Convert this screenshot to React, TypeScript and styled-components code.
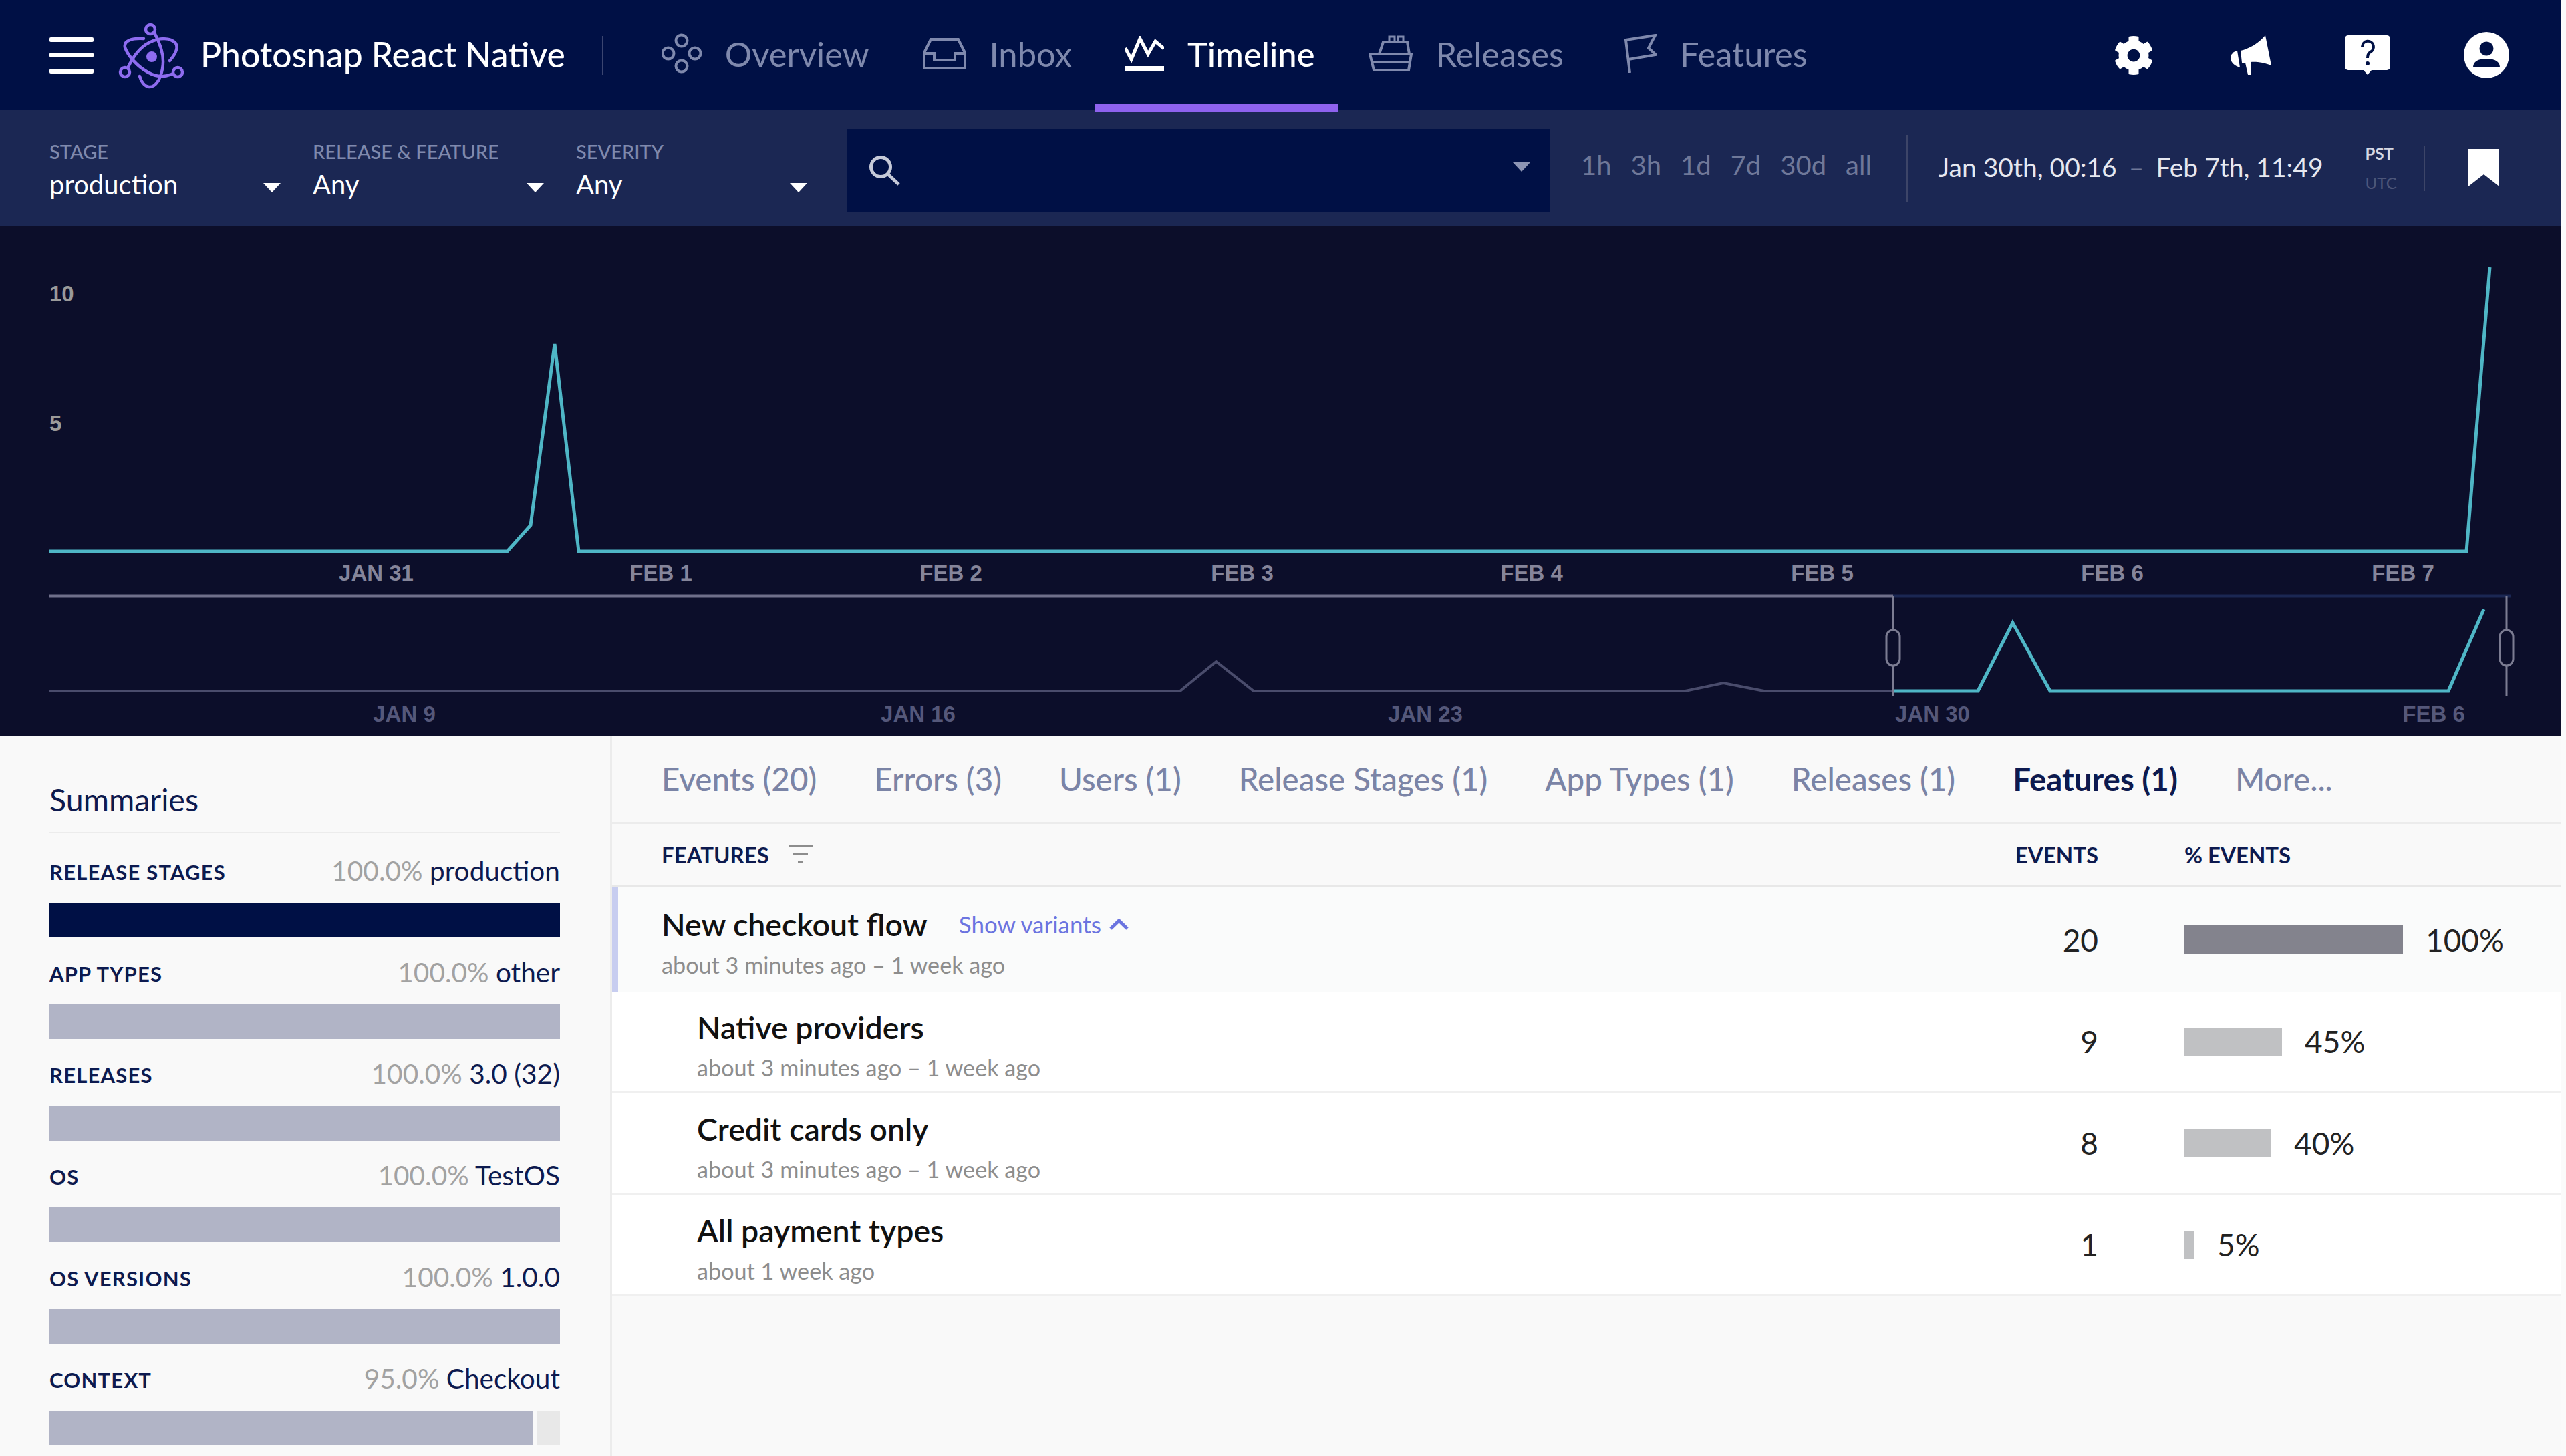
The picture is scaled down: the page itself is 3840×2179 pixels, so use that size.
import React from "react";
import styled, { createGlobalStyle } from "styled-components";
import { FaCog } from "react-icons/fa";

const GlobalStyle = createGlobalStyle`
  html, body {
    margin: 0;
    padding: 0;
    background: #fafafa;
  }
  body {
    font-family: Lato, "Open Sans", sans-serif;
  }
`;

const Page = styled.div`
  width: 3832px;
  height: 2179px;
  overflow: hidden;
  display: flex;
  flex-direction: column;
`;

/* top navigation */
const Header = styled.header`
  height: 165px;
  flex: none;
  display: flex;
  align-items: center;
  padding: 0 77px 0 74px;
  background: #001045;
`;

const Burger = styled.div`
  width: 66px;
  height: 54px;
  display: flex;
  flex-direction: column;
  justify-content: space-between;
  margin-right: 37px;
  span {
    height: 7px;
    border-radius: 2px;
    background: #fff;
  }
`;

const LogoSlot = styled.svg`
  width: 100px;
  height: 100px;
  flex: none;
  margin-right: 23px;
`;

const ProjectName = styled.div`
  padding-bottom: 4px;
  color: #fff;
  font-size: 51.6px;
  font-weight: 500;
  white-space: nowrap;
`;

const NavDivider = styled.div`
  width: 2px;
  height: 58px;
  margin: 0 42px 0 55px;
  background: #3b4570;
`;

const NavTabs = styled.nav`
  display: flex;
  align-self: stretch;
`;

const NavTab = styled.a<{ $active?: boolean }>`
  position: relative;
  display: flex;
  align-items: center;
  gap: 35px;
  padding: 0 35px 5px 45px;
  color: ${(p) => (p.$active ? "#fff" : "#7f89ad")};
  font-size: 50.7px;
  font-weight: ${(p) => (p.$active ? 500 : 400)};
  &::after {
    content: "";
    display: ${(p) => (p.$active ? "block" : "none")};
    position: absolute;
    left: 0;
    right: 0;
    top: 155px;
    height: 13px;
    background: #8e62ee;
    z-index: 2;
  }
`;

const NavIcon = styled.svg`
  flex: none;
  fill: none;
  stroke: currentColor;
  stroke-width: 4;
`;

const UtilIcons = styled.div`
  margin-left: auto;
  display: flex;
  align-items: center;
  gap: 110px;
  color: #fff;
  svg:first-child {
    margin-right: 5px;
  }
`;

/* filter bar */
const SubBar = styled.div`
  height: 173px;
  flex: none;
  display: flex;
  align-items: center;
  padding-left: 74px;
  background: #1b2753;
`;

const Filters = styled.div`
  display: flex;
  gap: 48px;
  margin: 7px 60px 0 0;
`;

const Filter = styled.div`
  width: 346px;
  height: 124px;
  padding-top: 18px;
  box-sizing: border-box;
`;

const FilterLabel = styled.div`
  height: 32px;
  line-height: 32px;
  color: #7f89ad;
  font-size: 29px;
  font-weight: 500;
`;

const FilterValue = styled.div`
  margin-top: 9px;
  height: 48px;
  display: flex;
  align-items: center;
  justify-content: space-between;
  color: #fff;
  font-size: 40px;
`;

const Caret = styled.span<{ $dim?: boolean }>`
  width: 0;
  height: 0;
  margin-top: ${(p) => (p.$dim ? "-10px" : "10px")};
  border-left: 13px solid transparent;
  border-right: 13px solid transparent;
  border-top: 14px solid ${(p) => (p.$dim ? "#8d95b4" : "#fff")};
`;

const SearchBox = styled.div`
  width: 1051px;
  height: 124px;
  flex: none;
  margin-top: 7px;
  display: flex;
  align-items: center;
  justify-content: space-between;
  padding: 0 29px 0 32px;
  box-sizing: border-box;
  background: #001045;
  color: #c5c9d8;
`;

const Ranges = styled.div`
  display: flex;
  gap: 29px;
  margin: -9px 52px 0 47px;
  color: #6f7899;
  font-size: 40px;
`;

const BarRule = styled.div<{ $h: number }>`
  width: 2px;
  height: ${(p) => p.$h}px;
  flex: none;
  background: #3d4568;
`;

const DateRange = styled.div`
  margin: -3px 63px 0 46px;
  display: flex;
  gap: 18px;
  color: #e6e8f0;
  font-size: 39px;
  white-space: nowrap;
  span {
    color: #6f7899;
  }
`;

const Zones = styled.div`
  width: 45px;
  margin-right: 42px;
  display: flex;
  flex-direction: column;
  gap: 16px;
  font-size: 24px;
  line-height: 28px;
`;

const Zone = styled.div<{ $on?: boolean }>`
  color: ${(p) => (p.$on ? "#d5d8e4" : "#4d5679")};
  font-weight: ${(p) => (p.$on ? 700 : 400)};
`;

const Bookmark = styled.svg`
  width: 46px;
  height: 56px;
  margin: -2px 0 0 65px;
  fill: #fff;
`;

/* charts */
const ChartSvg = styled.svg`
  display: block;
  flex: none;
  width: 3832px;
  height: 764px;
  background: #0c0e2a;
  font-family: "Liberation Sans", Arial, sans-serif;
  font-weight: 700;
`;

/* lower half */
const Lower = styled.div`
  flex: 1;
  display: flex;
  min-height: 0;
  background: #f9f9f9;
`;

const Sidebar = styled.aside`
  width: 916px;
  flex: none;
  box-sizing: border-box;
  padding: 62px 75px 0 74px;
  border-right: 3px solid #ececec;
`;

const SideTitle = styled.h2`
  margin: 0 0 4px;
  padding-bottom: 17px;
  height: 64px;
  line-height: 64px;
  box-sizing: content-box;
  border-bottom: 2px solid #ececec;
  color: #0d1a4f;
  font-size: 46.5px;
  font-weight: 400;
`;

const SumHead = styled.div`
  height: 100px;
  padding-top: 7px;
  box-sizing: border-box;
  display: flex;
  align-items: center;
  justify-content: space-between;
  white-space: nowrap;
`;

const SumLabel = styled.div`
  color: #0d1a4f;
  font-size: 31px;
  font-weight: 700;
  letter-spacing: 1.2px;
`;

const SumValue = styled.div`
  margin-top: -4px;
  color: #0d1a4f;
  font-size: 40.6px;
  span {
    color: #a2a2a2;
  }
`;

const SumTrack = styled.div`
  height: 52px;
  display: flex;
  gap: 7px;
`;

const SumFill = styled.div<{ $first?: boolean }>`
  height: 100%;
  background: ${(p) => (p.$first ? "#001045" : "#b1b4c6")};
`;

const SumRest = styled.div`
  flex: 1;
  background: #e8e8e8;
`;

const Main = styled.main`
  flex: 1;
  min-width: 0;
`;

const MainTabs = styled.div`
  height: 128px;
  box-sizing: content-box;
  display: flex;
  align-items: center;
  gap: 86px;
  padding-left: 74px;
  border-bottom: 3px solid #ececec;
`;

const MainTab = styled.div<{ $active?: boolean }>`
  margin-top: -2px;
  color: ${(p) => (p.$active ? "#0d1a4f" : "#7b84a6")};
  font-size: 47.5px;
  font-weight: ${(p) => (p.$active ? 700 : 500)};
  white-space: nowrap;
`;

const Cols = styled.div`
  display: grid;
  grid-template-columns: 1fr 120px 563px;
  column-gap: 129px;
  align-items: center;
`;

const TableHead = styled(Cols)`
  height: 91px;
  padding-left: 74px;
  border-bottom: 4px solid #e8e8e8;
  color: #0d1a4f;
  font-size: 33px;
  font-weight: 700;
`;

const HeadName = styled.div`
  display: flex;
  align-items: center;
  gap: 29px;
`;

const HeadEvents = styled.div`
  justify-self: end;
`;

const FeatureRow = styled(Cols)<{ $selected?: boolean; $variant?: boolean }>`
  height: ${(p) => (p.$selected ? 156 : 152)}px;
  box-sizing: border-box;
  padding-left: ${(p) => (p.$selected ? 65 : p.$variant ? 127 : 74)}px;
  background: ${(p) => (p.$selected ? "#fafbfb" : "#fff")};
  border-left: ${(p) => (p.$selected ? "9px solid #c7cdf0" : "none")};
  border-bottom: ${(p) => (p.$selected ? "none" : "3px solid #f0f0f0")};
`;

const NameCell = styled.div<{ $selected?: boolean }>`
  padding-top: ${(p) => (p.$selected ? 12 : 16)}px;
`;

const TitleLine = styled.div`
  display: flex;
  align-items: center;
  gap: 47px;
`;

const RowTitle = styled.div`
  color: #111;
  font-size: 46.5px;
  font-weight: 600;
  line-height: 60px;
`;

const ShowVariants = styled.a`
  display: flex;
  align-items: center;
  gap: 12px;
  color: #6b74e0;
  font-size: 35px;
`;

const RowSub = styled.div`
  margin-top: 3px;
  color: #8d8d8d;
  font-size: 34.2px;
  line-height: 56px;
`;

const RowCount = styled.div`
  justify-self: end;
  color: #222;
  font-size: 46px;
`;

const PctCell = styled.div`
  display: flex;
  align-items: center;
  gap: 34px;
  color: #222;
  font-size: 46px;
`;

const PctBar = styled.div<{ $selected?: boolean }>`
  height: 42px;
  flex: none;
  background: ${(p) => (p.$selected ? "#83838d" : "#c0c1c3")};
`;

const summaries = [
  { label: "RELEASE STAGES", pct: "100.0%", value: "production", fill: 100 },
  { label: "APP TYPES", pct: "100.0%", value: "other", fill: 100 },
  { label: "RELEASES", pct: "100.0%", value: "3.0 (32)", fill: 100 },
  { label: "OS", pct: "100.0%", value: "TestOS", fill: 100 },
  { label: "OS VERSIONS", pct: "100.0%", value: "1.0.0", fill: 100 },
  { label: "CONTEXT", pct: "95.0%", value: "Checkout", fill: 94.6 },
];

const tabs = ["Events (20)", "Errors (3)", "Users (1)", "Release Stages (1)", "App Types (1)", "Releases (1)", "Features (1)", "More..."];

const rows = [
  { name: "New checkout flow", sub: "about 3 minutes ago – 1 week ago", count: 20, pct: 100, barW: 327, selected: true },
  { name: "Native providers", sub: "about 3 minutes ago – 1 week ago", count: 9, pct: 45, barW: 146, variant: true },
  { name: "Credit cards only", sub: "about 3 minutes ago – 1 week ago", count: 8, pct: 40, barW: 130, variant: true },
  { name: "All payment types", sub: "about 1 week ago", count: 1, pct: 5, barW: 15, variant: true },
];

const Logo = () => (
  <LogoSlot viewBox="0 0 100 100" fill="none" stroke="#8e6cf0" strokeWidth="4.5" strokeLinecap="round">
    <circle cx="48" cy="11" r="7" />
    <circle cx="10" cy="75" r="7" />
    <circle cx="89" cy="75" r="7" />
    <circle cx="50" cy="52" r="8" fill="#8e6cf0" stroke="none" />
    <path d="M54 16 C62 32 70 50 66 70 C63 88 54 98 46 97 C39 96 34 89 32 81" />
    <path d="M14 69 C22 52 32 38 46 31 C62 23 78 23 86 32 C91 40 84 50 77 58" />
    <path d="M82 77 C70 83 58 83 44 75 C28 66 14 50 10 38 C8 28 20 24 38 25" />
  </LogoSlot>
);

const OverviewIcon = () => (
  <NavIcon width="60" height="60" viewBox="0 0 60 60">
    <circle cx="30" cy="11" r="8.5" />
    <circle cx="10" cy="30" r="8.5" />
    <circle cx="50" cy="30" r="8.5" />
    <circle cx="30" cy="49" r="8.5" />
  </NavIcon>
);

const InboxIcon = () => (
  <NavIcon width="65" height="50" viewBox="0 0 65 50">
    <path d="M12 4 H53 L63 24 V47 H2 V24 Z" />
    <path d="M2 25 H17 V35 H48 V25 H63" />
  </NavIcon>
);

const TimelineIcon = () => (
  <NavIcon width="58" height="52" viewBox="0 0 58 52" strokeLinejoin="miter">
    <path d="M0 18 L9 35 L22 4 L34 27 L45 8 L58 19" strokeWidth="5" />
    <rect x="0" y="45" width="58" height="7" fill="currentColor" stroke="none" />
  </NavIcon>
);

const ReleasesIcon = () => (
  <NavIcon width="66" height="54" viewBox="0 0 66 54">
    <path d="M31 10 V2 H39 V10 M44 10 V2 H52 V10" strokeWidth="3" />
    <path d="M16 28 L22 10 H58 L61 28" />
    <path d="M2 28 H64 L60 52 H8 Z" />
    <path d="M4 40 H62" />
  </NavIcon>
);

const FlagIcon = () => (
  <NavIcon width="59" height="58" viewBox="-11 0 59 58">
    <path d="M8 58 L2 9 L46 2 L36 21 L47 31 L6 38" />
  </NavIcon>
);

const MegaphoneIcon = () => (
  <svg width="61" height="59" viewBox="0 0 61 59" fill="#fff">
    <path d="M15 23 C28 20 42 12 52 0 L61 45 C50 40 36 39 30 40 L31 59 H26 L22 41 L17 41 Z" />
    <path d="M10 23 L14 48 C6 46 0 40 0 34 C0 28 5 24 10 23 Z" />
  </svg>
);

const HelpIcon = () => (
  <svg width="68" height="59" viewBox="0 0 68 59">
    <path d="M5 0 H63 A5 5 0 0 1 68 5 V47 A5 5 0 0 1 63 52 H40 L34 59 L28 52 H5 A5 5 0 0 1 0 47 V5 A5 5 0 0 1 5 0 Z" fill="#fff" />
    <path d="M26 17 A8.5 8.5 0 1 1 38 25 C35 27 34 29 34 34" fill="none" stroke="#001045" strokeWidth="4" />
    <circle cx="34" cy="42" r="3" fill="#001045" />
  </svg>
);

const UserIcon = () => (
  <svg width="68" height="69" viewBox="0 0 68 69">
    <ellipse cx="34" cy="34.5" rx="34" ry="34.5" fill="#fff" />
    <circle cx="34" cy="25" r="10.5" fill="#001045" />
    <path d="M14 53 C14 43 24 40 34 40 C44 40 54 43 54 53 Z" fill="#001045" />
  </svg>
);

const SearchIcon = () => (
  <svg width="47" height="46" viewBox="0 0 47 46" fill="none" stroke="currentColor" strokeWidth="5">
    <circle cx="18" cy="18" r="14.5" />
    <path d="M29 29 L45 44" />
  </svg>
);

const FilterIcon = () => (
  <svg width="36" height="28" viewBox="0 0 36 28" fill="#8d8d8d">
    <rect x="0" y="0" width="36" height="3" />
    <rect x="7" y="11" width="22" height="3" />
    <rect x="14" y="23" width="8" height="3" />
  </svg>
);

const ChevronUp = () => (
  <svg width="29" height="18" viewBox="0 0 29 18" fill="none" stroke="#6b74e0" strokeWidth="5">
    <path d="M2 16 L14.5 4 L27 16" />
  </svg>
);

const mainLabels: [string, number][] = [
  ["JAN 31", 563], ["FEB 1", 989], ["FEB 2", 1423], ["FEB 3", 1859],
  ["FEB 4", 2292], ["FEB 5", 2727], ["FEB 6", 3161], ["FEB 7", 3596],
];

const miniLabels: [string, number][] = [
  ["JAN 9", 605], ["JAN 16", 1374], ["JAN 23", 2133], ["JAN 30", 2892], ["FEB 6", 3642],
];

const Handle = ({ x }: { x: number }) => (
  <g fill="#0c0e2a" stroke="#7c7c92" strokeWidth="3">
    <path d={`M${x} 892 V1041`} />
    <rect x={x - 10} y="943" width="20" height="53" rx="10" />
  </g>
);

const Charts = () => (
  <ChartSvg viewBox="0 338 3832 764">
    <text x="74" y="451" fontSize="33" fill="#9a9a9a">10</text>
    <text x="74" y="645" fontSize="33" fill="#9a9a9a">5</text>
    <polyline
      points="74,825 759,825 794,786 830,515 866,825 3691,825 3726,400"
      fill="none"
      stroke="#4fb6c6"
      strokeWidth="5"
    />
    {mainLabels.map(([t, x]) => (
      <text key={t} x={x} y="869" fontSize="33" fill="#85859a" textAnchor="middle">{t}</text>
    ))}
    <path d="M74 892 H2833" stroke="#6f6f8a" strokeWidth="5" />
    <path d="M2833 892 H3758" stroke="#1b2753" strokeWidth="5" />
    <polyline
      points="74,1034 1766,1034 1820,990 1876,1034 2522,1034 2579,1022 2640,1034 2833,1034"
      fill="none"
      stroke="#4a4c6c"
      strokeWidth="4"
    />
    <polyline
      points="2833,1034 2960,1034 3012,932 3068,1034 3664,1034 3717,912"
      fill="none"
      stroke="#4fb6c6"
      strokeWidth="5"
    />
    {miniLabels.map(([t, x]) => (
      <text key={t} x={x} y="1080" fontSize="33" fill="#55587a" textAnchor="middle">{t}</text>
    ))}
    <Handle x={2833} />
    <Handle x={3751} />
  </ChartSvg>
);

export default function App() {
  return (
    <>
      <GlobalStyle />
      <Page>
        <Header>
          <Burger><span /><span /><span /></Burger>
          <Logo />
          <ProjectName>Photosnap React Native</ProjectName>
          <NavDivider />
          <NavTabs>
            <NavTab><OverviewIcon />Overview</NavTab>
            <NavTab><InboxIcon />Inbox</NavTab>
            <NavTab $active><TimelineIcon />Timeline</NavTab>
            <NavTab><ReleasesIcon />Releases</NavTab>
            <NavTab><FlagIcon />Features</NavTab>
          </NavTabs>
          <UtilIcons>
            <FaCog size={60} />
            <MegaphoneIcon />
            <HelpIcon />
            <UserIcon />
          </UtilIcons>
        </Header>

        <SubBar>
          <Filters>
            <Filter>
              <FilterLabel>STAGE</FilterLabel>
              <FilterValue>production<Caret /></FilterValue>
            </Filter>
            <Filter>
              <FilterLabel>RELEASE &amp; FEATURE</FilterLabel>
              <FilterValue>Any<Caret /></FilterValue>
            </Filter>
            <Filter>
              <FilterLabel>SEVERITY</FilterLabel>
              <FilterValue>Any<Caret /></FilterValue>
            </Filter>
          </Filters>
          <SearchBox>
            <SearchIcon />
            <Caret $dim />
          </SearchBox>
          <Ranges>
            <span>1h</span><span>3h</span><span>1d</span><span>7d</span><span>30d</span><span>all</span>
          </Ranges>
          <BarRule $h={100} />
          <DateRange>Jan 30th, 00:16 <span>–</span> Feb 7th, 11:49</DateRange>
          <Zones>
            <Zone $on>PST</Zone>
            <Zone>UTC</Zone>
          </Zones>
          <BarRule $h={68} />
          <Bookmark viewBox="0 0 46 56">
            <path d="M0 0 H46 V56 L23 38 L0 56 Z" />
          </Bookmark>
        </SubBar>

        <Charts />

        <Lower>
          <Sidebar>
            <SideTitle>Summaries</SideTitle>
            {summaries.map((s, i) => (
              <div key={s.label}>
                <SumHead>
                  <SumLabel>{s.label}</SumLabel>
                  <SumValue><span>{s.pct}</span> {s.value}</SumValue>
                </SumHead>
                <SumTrack>
                  <SumFill $first={i === 0} style={{ width: `${s.fill}%` }} />
                  {s.fill < 100 && <SumRest />}
                </SumTrack>
              </div>
            ))}
          </Sidebar>

          <Main>
            <MainTabs>
              {tabs.map((t) => (
                <MainTab key={t} $active={t === "Features (1)"}>{t}</MainTab>
              ))}
            </MainTabs>
            <TableHead>
              <HeadName>FEATURES <FilterIcon /></HeadName>
              <HeadEvents>EVENTS</HeadEvents>
              <div>% EVENTS</div>
            </TableHead>
            {rows.map((r) => (
              <FeatureRow key={r.name} $selected={r.selected} $variant={r.variant}>
                <NameCell $selected={r.selected}>
                  <TitleLine>
                    <RowTitle>{r.name}</RowTitle>
                    {r.selected && <ShowVariants>Show variants <ChevronUp /></ShowVariants>}
                  </TitleLine>
                  <RowSub>{r.sub}</RowSub>
                </NameCell>
                <RowCount>{r.count}</RowCount>
                <PctCell>
                  <PctBar $selected={r.selected} style={{ width: r.barW }} />
                  {r.pct}%
                </PctCell>
              </FeatureRow>
            ))}
          </Main>
        </Lower>
      </Page>
    </>
  );
}
